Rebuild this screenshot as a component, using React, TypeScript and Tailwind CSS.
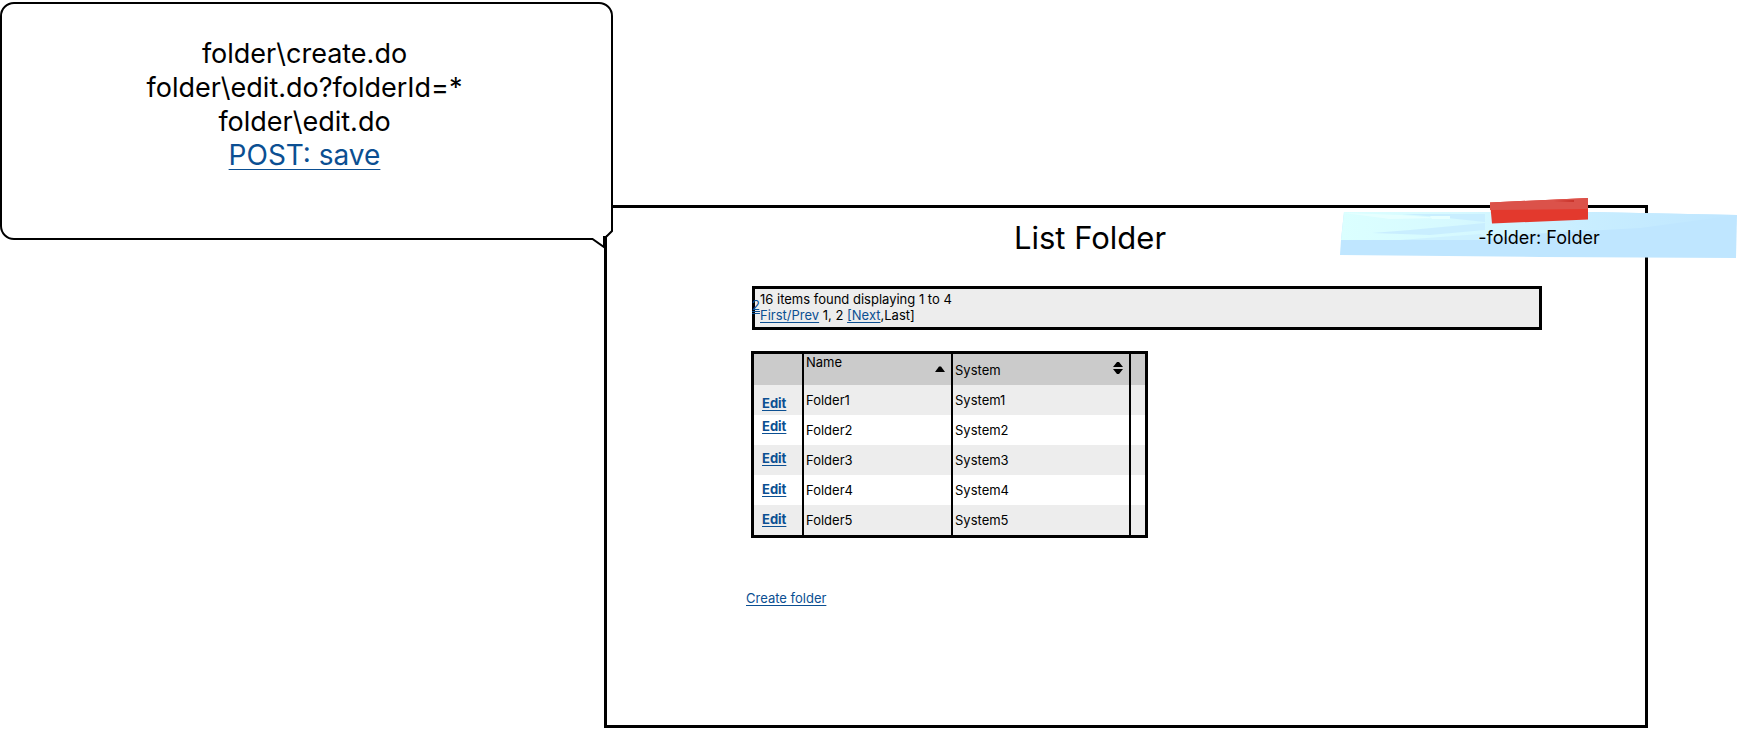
import type { ReactNode } from "react";

const folders = [
  { name: "Folder1", system: "System1", editPad: "pt-1.5" },
  { name: "Folder2", system: "System2", editPad: "pb-2" },
  { name: "Folder3", system: "System3", editPad: "pb-1" },
  { name: "Folder4", system: "System4", editPad: "pb-0.5" },
  { name: "Folder5", system: "System5", editPad: "pb-0.5" },
];

function TextLink({ children, className = "underline-offset-2" }: { children: ReactNode; className?: string }) {
  return (
    <a href="#" className={`text-[#0b4f92] underline decoration-1 [text-decoration-skip-ink:none] ${className}`}>
      {children}
    </a>
  );
}

function Callout() {
  return (
    <aside className="relative z-10 mt-0.5 h-[238px] w-[613px] rounded-[14px] border-2 border-black bg-white pt-[33px] pr-1 text-center text-[27px] leading-[34px]">
      <p>folder\create.do</p>
      <p>folder\edit.do?folderId=*</p>
      <p>folder\edit.do</p>
      <p className="text-[28px] leading-8">
        <TextLink className="underline-offset-4">POST: save</TextLink>
      </p>
      <svg className="absolute -right-0.5 -bottom-3 h-7 w-8" viewBox="0 0 32 28" aria-hidden="true">
        <path d="M11 15 H26 V0 H32 V28 H23 L11 19 Z" fill="#fff" />
        <path d="M24.5 14 V28" stroke="#000" strokeWidth="3" />
        <path d="M8 17 H11.500 L23 25 V15 H25 L31 9 V0" fill="none" stroke="#000" strokeWidth="2" />
      </svg>
    </aside>
  );
}

function Tape() {
  return (
    <div className="absolute -top-3 -right-[93px] flex h-16 w-[398px] items-end justify-center pb-2 text-[18px] leading-7">
      <svg className="absolute inset-0 size-full" viewBox="0 0 398 64" aria-hidden="true">
        <defs>
          <linearGradient id="sheen" x1="0" x2="1" y1="0" y2="0">
            <stop offset="0" stopColor="#dbffff" />
            <stop offset="0.3" stopColor="#d6f9ff" />
            <stop offset="0.6" stopColor="#c9eeff" />
            <stop offset="1" stopColor="#bfe6ff" />
          </linearGradient>
        </defs>
        <path d="M4 16 L250 16 L397 19 L396 62 L200 61 L0 59 L1 44 Z" fill="#bfe6ff" />
        <path d="M4 16 L250 16 L397 19 L300 32 L190 38 L140 44 L1 44 Z" fill="url(#sheen)" />
        <path d="M62 18 L145 18 V26 L98 21 Z M32 37 L70 34 L145 27 V34 L90 39 Z" fill="#c9eeff" />
        <path d="M4 17 L60 19 L100 22 L50 23 Z M90 20 h20 v3 h-18 Z" fill="#e6ffff" />
        <path d="M60 44 L140 38 L150 44 Z" fill="#cdf1ff" />
        <path d="M150 6.500 L248 2 V23.500 L152 27.500 Z" fill="#e3392d" />
        <path d="M150 6.500 L248 2 V13 L150 14 Z" fill="#db524a" />
        <path d="M214 5 L234 4 V6 Z" fill="#c9342b" />
      </svg>
      <span className="relative">-folder: Folder</span>
    </div>
  );
}

function FolderTable() {
  return (
    <table className="mt-[21px] ml-[144px] border-separate border-spacing-0 border-[3px] border-black leading-5">
      <thead>
        <tr className="h-[31px] bg-[#cbcbcb] text-left">
          <th className="w-[50px] border-r-2 border-black p-0" aria-label="Actions" />
          <th className="w-[149px] border-r-2 border-black p-0 align-top font-normal">
            <div className="flex items-start justify-between pr-1.5 pl-0.5">
              <span className="-mt-0.5">Name</span>
              <svg className="mt-3 h-[6px] w-[10px]" viewBox="0 0 10 6" aria-hidden="true">
                <path d="M0 6 L4 0.500 H6 L10 6 Z" />
              </svg>
            </div>
          </th>
          <th className="w-[178px] border-r-2 border-black p-0 font-normal">
            <div className="flex items-center justify-between pr-1.5 pl-0.5">
              System
              <svg className="mb-1 h-3 w-[10px]" viewBox="0 0 10 12" aria-hidden="true">
                <path d="M0 5 L4 0 H6 L10 5 Z M0 7 H10 L6 12 H4 Z" />
              </svg>
            </div>
          </th>
          <th className="w-[14px] p-0" aria-label="Scroll" />
        </tr>
      </thead>
      <tbody>
        {folders.map(({ name, system, editPad }) => (
          <tr key={name} className="h-[30px] odd:bg-[#ededed]">
            <td className="border-r-2 border-black p-0 pl-2">
              <div className={editPad}>
                <TextLink className="font-bold underline-offset-2">Edit</TextLink>
              </div>
            </td>
            <td className="border-r-2 border-black p-0 pl-0.5">{name}</td>
            <td className="border-r-2 border-black p-0 pl-0.5">{system}</td>
            <td className="p-0" />
          </tr>
        ))}
      </tbody>
    </table>
  );
}

export default function App() {
  return (
    <div className="flex items-start bg-white font-[Inter,sans-serif] text-[13px] text-black">
      <Callout />
      <main className="relative mt-[205px] mr-[91px] -ml-[9px] min-h-[523px] flex-1 border-[3px] border-black pb-6">
        <Tape />
        <h1 className="mt-3 pr-[72px] text-center text-[31px] leading-9">List Folder</h1>
        <section className="relative mt-[30px] mr-[103px] ml-[145px] border-[3px] border-black bg-[#ededed] pt-0.5 pb-1 pl-[5px] leading-4">
          <a href="#" className="absolute top-2 -left-[3px] text-[#0b4f92] underline decoration-double underline-offset-1">
            2
          </a>
          <p>16 items found displaying 1 to 4</p>
          <p>
            <TextLink>First/Prev</TextLink> 1, 2 <TextLink>[Next</TextLink>,Last]
          </p>
        </section>
        <FolderTable />
        <p className="mt-[50px] ml-[139px] leading-5">
          <TextLink>Create folder</TextLink>
        </p>
      </main>
    </div>
  );
}
